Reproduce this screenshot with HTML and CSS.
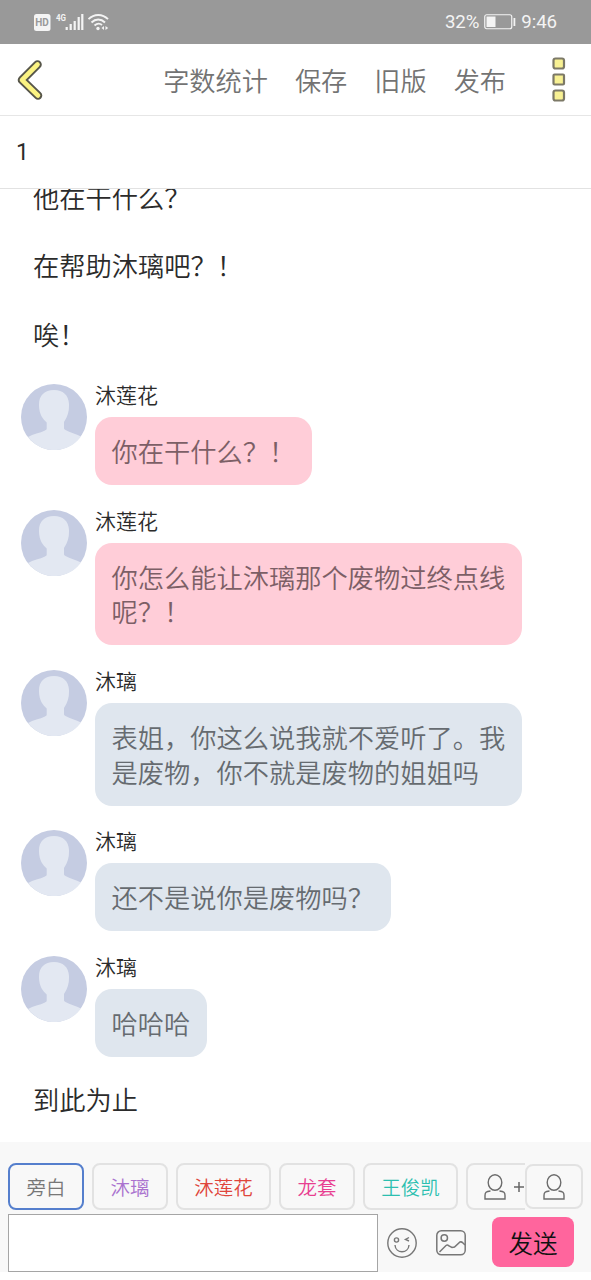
FILE: index.html
```html
<!DOCTYPE html>
<html lang="zh-CN">
<head>
<meta charset="utf-8">
<title>1</title>
<link rel="stylesheet" href="styles.css">
</head>
<body>
<svg width="0" height="0" class="defs">
  <symbol id="avatar" viewBox="0 0 66 66">
    <circle cx="33" cy="33" r="33" fill="#c5cce2"/>
    <path d="M33 6C23 6 17.500 12 18 22C18.300 30 21.500 35 25.700 38.500V44.500C25.700 45.500 25 46 24 46.500C19 49 12 50 7 53A33 33 0 0 0 60 52.500C55 50 49 48.500 44.500 46C43.500 45.500 43 45 43 44V38C47 32 48.300 27 48 20C47.500 11 42 6 33 6Z" fill="#e3e8f2"/>
  </symbol>
  <symbol id="person" viewBox="0 0 24 28">
    <g fill="none" stroke="#6c6c6c" stroke-width="1.400">
      <ellipse cx="12" cy="9.500" rx="6.800" ry="7.800"/>
      <path d="M7.500 18C3 18.500 2 19.500 2 22.500V26H22V22.500C22 19.500 21 18.500 16.500 18"/>
    </g>
  </symbol>
</svg>
<header class="status">
  <svg class="status-icons" width="76" height="20" viewBox="0 0 76 20">
    <rect x="0" y="2" width="16.500" height="17" rx="2.500" fill="#f4f4f4"/>
    <text x="1.200" y="14.300" font-size="10" font-weight="700" fill="#999" class="lbl">HD</text>
    <text x="22" y="9" font-size="9.500" font-weight="700" fill="#f4f4f4" class="lbl" textLength="10" lengthAdjust="spacingAndGlyphs">4G</text>
    <g stroke="#f4f4f4" stroke-width="2.200">
      <path d="M32.700 18v-3M36.700 18v-6M40.700 18v-9M44.700 18V5M48.300 18V2"/>
    </g>
    <g fill="none" stroke="#f4f4f4" stroke-width="1.900">
      <path d="M54.500 7.200C60 1.500 68.500 1.500 74 7.200M57.500 10.500C61.500 6.500 67 6.500 71 10.500M60.500 13.500C63 11.300 66 11.300 68 13"/>
    </g>
    <circle cx="64" cy="16.500" r="1.700" fill="#f4f4f4"/>
    <path d="M70 14v4l-2.500-2zM71.500 14v4l2.700-2z" fill="#f4f4f4"/>
  </svg>
  <div class="status-right">
    <span>32%</span>
    <svg width="32" height="16" viewBox="0 0 32 16"><rect x=".75" y=".75" width="27" height="14" rx="2" fill="none" stroke="#f4f4f4" stroke-width="1.200"/><rect x="2.500" y="2.500" width="9" height="10.500" fill="#f4f4f4"/><rect x="29.500" y="4" width="1.800" height="8" fill="#f4f4f4"/></svg>
    <span>9:46</span>
  </div>
</header>
<nav class="nav">
  <svg class="back" width="28" height="42" viewBox="0 0 28 42"><g fill="none" stroke-linecap="round" stroke-linejoin="round"><path d="M21.500 5.500L6 21L22 36.500" stroke="#57564a" stroke-width="8.600"/><path d="M21.500 5.500L6 21L22 36.500" stroke="#fbf382" stroke-width="4.600"/></g></svg>
  <div class="links"><span>字数统计</span><span>保存</span><span>旧版</span><span>发布</span></div>
  <svg class="more" width="14" height="46" viewBox="0 0 14 46"><g fill="#f8f193" stroke="#7c7967" stroke-width="2.200"><rect x="1.500" y="1.500" width="10.500" height="10" rx="2"/><rect x="1.500" y="17.500" width="10.500" height="10" rx="1"/><rect x="1.500" y="33.500" width="10.500" height="10" rx="2"/></g></svg>
</nav>
<div class="chapter">1</div>
<main class="chat">
  <p class="narration">他在干什么？</p>
  <p class="narration">在帮助沐璃吧？！</p>
  <p class="narration">唉！</p>
  <article class="msg pink"><svg class="avatar"><use href="#avatar"/></svg><div class="body"><div class="name">沐莲花</div><div class="bubble">你在干什么？！</div></div></article>
  <article class="msg pink"><svg class="avatar"><use href="#avatar"/></svg><div class="body"><div class="name">沐莲花</div><div class="bubble">你怎么能让沐璃那个废物过终点线<br>呢？！</div></div></article>
  <article class="msg"><svg class="avatar"><use href="#avatar"/></svg><div class="body"><div class="name">沐璃</div><div class="bubble">表姐，你这么说我就不爱听了。我<br>是废物，你不就是废物的姐姐吗</div></div></article>
  <article class="msg"><svg class="avatar"><use href="#avatar"/></svg><div class="body"><div class="name">沐璃</div><div class="bubble">还不是说你是废物吗？</div></div></article>
  <article class="msg"><svg class="avatar"><use href="#avatar"/></svg><div class="body"><div class="name">沐璃</div><div class="bubble">哈哈哈</div></div></article>
  <p class="narration">到此为止</p>
</main>
<footer class="composer">
  <div class="roles">
    <div class="chips">
      <button class="chip selected">旁白</button>
      <button class="chip violet">沐璃</button>
      <button class="chip red">沐莲花</button>
      <button class="chip magenta">龙套</button>
      <button class="chip teal">王俊凯</button>
      <button class="chip add"><svg class="person"><use href="#person"/></svg><svg width="12" height="12" viewBox="0 0 12 12"><path d="M6 1v10M1 6h10" stroke="#666" stroke-width="1.500"/></svg></button>
    </div>
    <button class="chip manage"><svg class="person"><use href="#person"/></svg></button>
  </div>
  <div class="entry">
    <div class="input"></div>
    <svg class="smile" width="30" height="30" viewBox="0 0 30 30"><g fill="none" stroke="#777" stroke-width="1.400"><circle cx="15" cy="15" r="14.200"/><circle cx="9.500" cy="12" r="2.100"/><path d="M22 9.500L18.500 11.500L22 13M8 17C8.500 26 21.500 26 22 17"/></g></svg>
    <svg class="picture" width="30" height="26" viewBox="0 0 30 26"><g fill="none" stroke="#777" stroke-width="1.500"><rect x=".8" y=".8" width="28.400" height="24" rx="4.500"/><circle cx="8.300" cy="8" r="3.200"/><path d="M3.500 22L10 15.500Q11.500 14.500 13 16L16 17.500L18.500 17L24 12Q25.500 11.500 27 13L29 15"/></g></svg>
    <button class="send">发送</button>
  </div>
</footer>
</body>
</html>
```
FILE: styles.css
```css
* { box-sizing: border-box; }
body {
  margin: 0; width: 591px; height: 1280px; overflow: hidden;
  display: flex; flex-direction: column; padding-bottom: 8px;
  background: #fff; color: #2b2b2b;
  font-family: "Noto Sans CJK SC", sans-serif; font-weight: 350;
}
button { font: inherit; margin: 0; }
.defs { position: absolute; }
.status {
  flex: none; height: 44px; padding: 0 34px; background: #999; color: #f4f4f4;
  display: flex; justify-content: space-between; align-items: center;
}
.lbl { font-family: Roboto, sans-serif; }
.status-right { display: flex; align-items: center; gap: 5px; font: 18.700px/46px Roboto, sans-serif; letter-spacing: -.1px; }
.nav {
  flex: none; height: 72px; border-bottom: 1px solid #e6e6e6;
  display: flex; align-items: center; padding: 0 25px 0 16px;
}
.back { flex: none; }
.links { margin-left: auto; display: flex; gap: 27px; font-size: 26.200px; line-height: 40px; color: #737373; }
.more { margin-left: 46px; flex: none; }
.chapter {
  flex: none; height: 73px; padding: 1px 16px 0; line-height: 72px; font-size: 23px; font-weight: 400;
  border-bottom: 1px solid #e2e2e2; font-family: Roboto, sans-serif;
}
.chat {
  flex: 1; min-height: 0; overflow: hidden; padding-bottom: 7px;
  display: flex; flex-direction: column; justify-content: flex-end;
}
.narration { flex: none; margin: 0; padding: 15.500px 33px 18.500px; font-size: 26.250px; line-height: 34.500px; }
.msg { flex: none; display: flex; gap: 8px; padding: 14.800px 21px 9.800px; }
.avatar { width: 66px; height: 66px; flex: none; }
.name { height: 33px; line-height: 21px; font-size: 21px; }
.bubble {
  width: max-content; padding: 17px 16.500px 16.500px; border-radius: 17px;
  background: #dfe6ee; color: #666b70; font-size: 26.250px; line-height: 34.500px;
}
.pink .bubble { background: #ffcdd8; color: #7c5f66; }
.composer { flex: none; height: 130px; background: #f8f8f8; padding: 21px 8px 0; }
.roles { display: flex; height: 47px; align-items: flex-start; }
.chips { display: flex; gap: 8px; width: 517px; overflow: hidden; }
.chip {
  flex: none; height: 47px; padding: 0 17px; border: 2px solid #e2e2e2; border-radius: 8px;
  background: transparent; font-size: 19.500px; line-height: 44px; color: #777;
  display: flex; align-items: center; justify-content: center; white-space: nowrap;
}
.selected { border: 2px solid #557fcd; width: 76px; }
.violet { color: #aa73cf; width: 76px; }
.red { color: #df453b; width: 95px; }
.magenta { color: #e83f91; width: 76px; }
.teal { color: #2cbfb0; width: 95px; }
.add { width: 85px; padding: 0 0 0 15px; gap: 6px; justify-content: flex-start; }
.person { width: 24px; height: 28px; flex: none; }
.manage { width: 58px; height: 45px; margin-top: 1px; padding: 0; background: #f8f8f8; }
.entry { display: flex; align-items: center; height: 58px; margin-top: 4px; }
.input { width: 370px; height: 58px; background: #fff; border: 1px solid #a5a5a5; }
.smile { margin-left: 9px; }
.picture { margin-left: 19px; }
.send {
  margin-left: 26px; width: 82px; height: 50px; padding: 0; border: 0; border-radius: 8px;
  margin-bottom: 3px; background: #ff659d; color: #111; font-size: 24.500px; line-height: 52px;
}
```
